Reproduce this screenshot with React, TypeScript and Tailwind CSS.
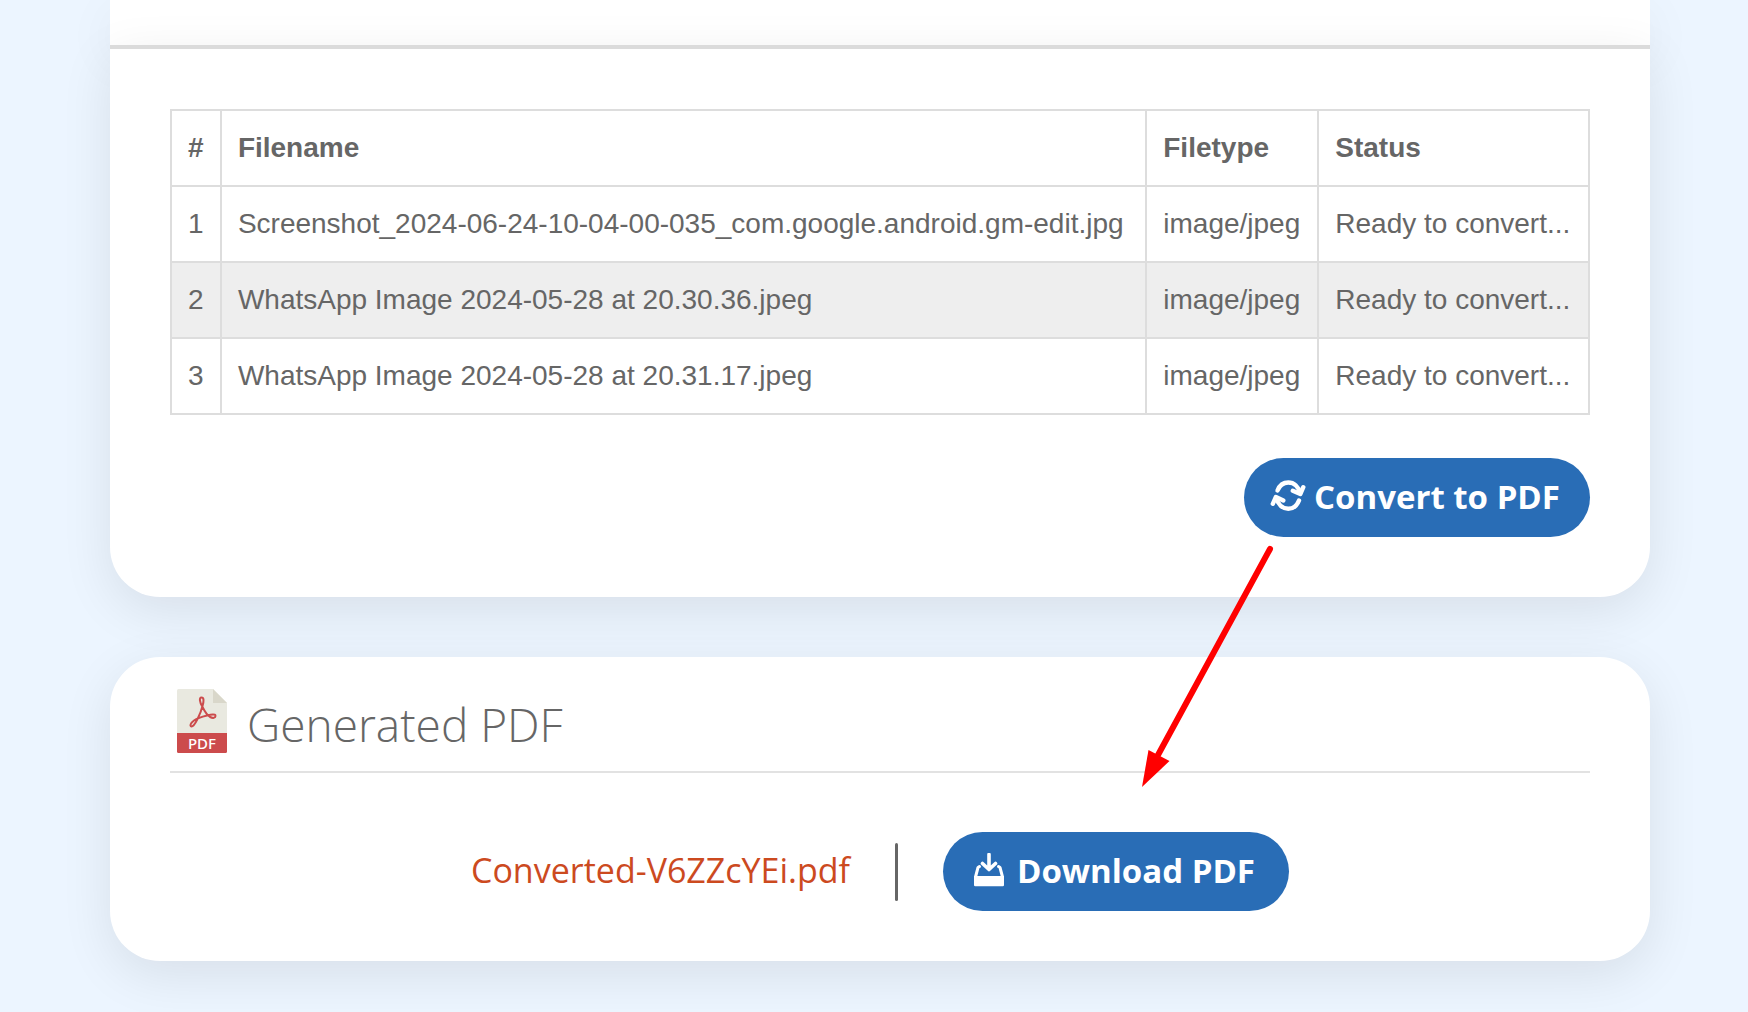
import type { ReactNode } from 'react'

const files = [
  { name: 'Screenshot_2024-06-24-10-04-00-035_com.google.android.gm-edit.jpg', type: 'image/jpeg', status: 'Ready to convert...' },
  { name: 'WhatsApp Image 2024-05-28 at 20.30.36.jpeg', type: 'image/jpeg', status: 'Ready to convert...' },
  { name: 'WhatsApp Image 2024-05-28 at 20.31.17.jpeg', type: 'image/jpeg', status: 'Ready to convert...' },
]

const cell = 'border-2 border-[#dddddd] px-4 py-4'

function RefreshIcon() {
  return (
    <svg className="h-9 w-9 shrink-0" viewBox="0 0 36 36" fill="none" stroke="currentColor" strokeWidth={4.4} strokeLinecap="round" strokeLinejoin="round">
      <path d="M7.5 11.5C9.5 6.5 13.500 3.500 18.300 3.500C24 3.500 28.500 7.500 30 14" />
      <path d="M22.800 11.800L30.300 15L33.300 8.200" />
      <path d="M29 21.500C27 26.500 23 29.700 18.300 29.700C12.500 29.700 8 25.500 6.200 19" />
      <path d="M2.800 24.800L5.900 18L13.300 21.500" />
    </svg>
  )
}

function DownloadIcon() {
  return (
    <svg className="h-9 w-10 shrink-0" viewBox="0 0 40 36" fill="none" stroke="currentColor" strokeLinecap="round" strokeLinejoin="round">
      <path d="M20 1.500V16M13.500 10.500L20 16.500L26.500 10.500" strokeWidth={3.6} />
      <path d="M10.500 13.500L9 14.500L6.500 24M29.500 13.500L31 14.500L33.500 24" strokeWidth={3} />
      <path d="M5 23H35V32Q35 33.300 33.700 33.300H6.300Q5 33.300 5 32Z" fill="currentColor" stroke="none" />
    </svg>
  )
}

function PdfIcon() {
  return (
    <svg className="h-16 w-[50px] shrink-0" viewBox="0 0 50 64" role="img" aria-label="PDF file">
      <path d="M1.500 0H36L50 14V45H0V1.500Q0 0 1.500 0Z" fill="#e9e9e0" />
      <path d="M36 0L50 14H36Z" fill="#d9d7ca" />
      <path d="M0 44H50V62.500Q50 64 48.500 64H1.500Q0 64 0 62.500Z" fill="#cc4b4c" />
      <path
        d="M25.500 17C27 12 27 8.500 24.500 8.500C22 8.500 22.500 13 25.500 18C27.500 22 30 26 33 28C36 29.500 38.500 29 38.500 27C38.500 24.500 34 25.500 30 26.500C25 27.700 20.500 29 17 31.500C13.500 34 12.500 37 14.500 37.500C17 37.500 19 33 21 29C23 25 24.500 21 25.500 17Z"
        fill="none"
        stroke="#cc4b4c"
        strokeWidth={2}
      />
      <text x="25" y="60" textAnchor="middle" fill="#ffffff" fontSize="15" fontWeight="500" fontFamily="'Noto Sans', sans-serif">PDF</text>
    </svg>
  )
}

function PillButton({ icon, children }: { icon: ReactNode; children: ReactNode }) {
  return (
    <button type="button" className="flex h-[79px] w-[346px] items-center gap-2 rounded-full bg-[#296db6] pb-0.5 pl-[26px] font-['Open_Sans',sans-serif] text-[33px] font-bold whitespace-nowrap text-white hover:bg-[#205a99]">
      {icon}
      {children}
    </button>
  )
}

export default function App() {
  return (
    <main className="min-h-screen bg-[#ecf5ff] pr-[98px] pb-[51px] pl-[110px] font-['Liberation_Sans',Arial,sans-serif] text-[#666666]">
      <div className="h-[45px] bg-white shadow-[0_14px_52px_rgba(0,0,0,0.06)]" />

      <section className="relative rounded-b-[50px] border-t-4 border-[#dbdbdb] bg-white p-[60px] shadow-[0_14px_52px_rgba(0,0,0,0.09)]">
        <table className="w-full border-collapse text-left text-[28px] leading-[42px]">
          <thead>
            <tr>
              <th className={cell}>#</th>
              <th className={cell}>Filename</th>
              <th className={cell}>Filetype</th>
              <th className={cell}>Status</th>
            </tr>
          </thead>
          <tbody>
            {files.map((file, i) => (
              <tr key={file.name} className="even:bg-[#eeeeee]">
                <td className={cell}>{i + 1}</td>
                <td className={cell}>{file.name}</td>
                <td className={cell}>{file.type}</td>
                <td className={cell}>{file.status}</td>
              </tr>
            ))}
          </tbody>
        </table>
        <div className="mt-[43px] flex justify-end">
          <PillButton icon={<RefreshIcon />}>Convert to PDF</PillButton>
        </div>
      </section>

      <section className="relative mt-[60px] rounded-[50px] bg-white px-[60px] pt-8 pb-[50px] shadow-[0_14px_52px_rgba(0,0,0,0.09)]">
        <div className="flex items-end gap-5 border-b-2 border-[#e2e2e2] pb-[18px] pl-[7px]">
          <PdfIcon />
          <h2 className="font-['Open_Sans',sans-serif] text-[46px] leading-[58px] font-light">Generated PDF</h2>
        </div>
        <div className="mt-[59px] flex items-center justify-center">
          <a href="#" className="pb-0.5 font-['Open_Sans',sans-serif] text-[34px] text-[#cc4a1f]">Converted-V6ZZcYEi.pdf</a>
          <span className="mx-[45px] h-[58px] w-[3px] rounded-full bg-[#666666]" />
          <PillButton icon={<DownloadIcon />}>Download PDF</PillButton>
        </div>

        {/* arrow from the convert button to the download button */}
        <svg className="pointer-events-none absolute -top-[116px] right-[370px] h-[250px] w-[140px]" viewBox="0 0 140 250" aria-hidden="true">
          <path d="M130 8L18 214" stroke="#ff0000" strokeWidth={6} strokeLinecap="round" />
          <path d="M2 246L8.500 209L29.500 220Z" fill="#ff0000" />
        </svg>
      </section>
    </main>
  )
}
